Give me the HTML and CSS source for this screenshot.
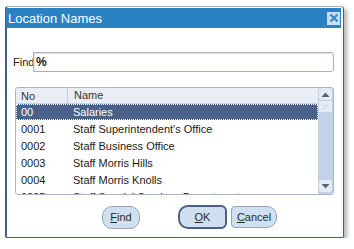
FILE: index.html
```html
<!DOCTYPE html>
<html lang="en">
    <head>
        <meta charset="UTF-8" />
        <title>Location Names</title>
        <link rel="stylesheet" href="styles.css">
    </head>
    <body>
        <div class="dialog">
            <div class="titleBar">
                <span class="title">Location Names</span>
                <span class="closeBtn">
                    <svg width="10" height="10" viewBox="0 0 10 10">
                        <path d="M1.5 1.5 L8.5 8.5 M8.5 1.5 L1.5 8.5" stroke="#3b86c6" stroke-width="2.2" />
                    </svg>
                </span>
            </div>
            <div class="body">
                <div class="findRow">
                    <label class="findLabel">Find</label>
                    <div class="findInput">%</div>
                </div>
                <div class="list">
                    <div class="rows">
                        <div class="row header"><span class="colNo">No</span><span class="colName">Name</span></div>
                        <div class="row selected"><span class="colNo">00</span><span class="colName">Salaries</span></div>
                        <div class="row"><span class="colNo">0001</span><span class="colName">Staff Superintendent's Office</span></div>
                        <div class="row"><span class="colNo">0002</span><span class="colName">Staff Business Office</span></div>
                        <div class="row"><span class="colNo">0003</span><span class="colName">Staff Morris Hills</span></div>
                        <div class="row"><span class="colNo">0004</span><span class="colName">Staff Morris Knolls</span></div>
                        <div class="row"><span class="colNo">0005</span><span class="colName">Staff Special Services Department</span></div>
                    </div>
                    <div class="scrollbar">
                        <div class="scrollBtn"><svg width="9" height="5" viewBox="0 0 9 5"><path d="M0.5 5 L4.5 0.5 L8.5 5 Z" fill="#55647a" /></svg></div>
                        <div class="thumb"><svg width="7" height="7" viewBox="0 0 7 7"><path d="M1 6 L6 1" stroke="#8b9bb2" stroke-width="1" stroke-dasharray="1 1.5" /></svg></div>
                        <div class="track"></div>
                        <div class="scrollBtn"><svg width="9" height="5" viewBox="0 0 9 5"><path d="M0.5 0 L8.5 0 L4.5 4.5 Z" fill="#55647a" /></svg></div>
                    </div>
                </div>
                <div class="buttons">
                    <span class="btn findBtn"><u>F</u>ind</span>
                    <span class="btn okBtn"><u>O</u>K</span>
                    <span class="btn cancelBtn"><u>C</u>ancel</span>
                </div>
            </div>
        </div>
    </body>
</html>
```

FILE: styles.css
```css
* {
    box-sizing: border-box;
}
body {
    margin: 0;
    background-color: #ffffff;
    font-family: "Liberation Sans", Arial, sans-serif;
    font-size: 11px;
    color: #1a1a1a;
}
.dialog {
    margin: 6px 0 0 5px;
    width: 339px;
    height: 232px;
    border: 1px solid #4b5f86;
    border-left-width: 2px;
    border-top-color: #a3aec2;
    border-radius: 3px 3px 2px 2px;
    box-shadow: 3px 3px 4px rgba(0, 0, 0, 0.3);
    background-color: #ffffff;
    padding-top: 1px;
    display: flex;
    flex-direction: column;
}
.titleBar {
    height: 20px;
    margin: 0 2px 0 -1px;
    background-color: #2b82c3;
    display: flex;
    align-items: center;
    justify-content: space-between;
    padding: 0 1px 0 2px;
}
.title {
    color: #ffffff;
    font-size: 13px;
}
.closeBtn {
    width: 13px;
    height: 13px;
    background-color: #c8ddef;
    display: flex;
    align-items: center;
    justify-content: center;
}
.body {
    padding: 24px 9px 0 6px;
    display: flex;
    flex-direction: column;
}
.findRow {
    display: flex;
    align-items: center;
}
.findLabel {
    width: 20px;
}
.findInput {
    flex: 1;
    height: 20px;
    line-height: 18px;
    padding-left: 2px;
    border: 1px solid #a6b0c2;
    border-radius: 0 3px 3px 0;
    font-weight: bold;
    font-size: 12px;
    box-shadow: inset 1px 1px 0 #e2e6ec;
}
.list {
    margin-top: 15px;
    margin-left: 2px;
    height: 108px;
    border: 1px solid #a9b4c6;
    border-radius: 3px;
    display: flex;
    overflow: hidden;
}
.rows {
    flex: 1;
}
.row {
    height: 17px;
    display: flex;
    align-items: center;
    white-space: nowrap;
}
.header {
    height: 16px;
    background-color: #e9eef6;
    border-bottom: 1px solid #c9d2e0;
    color: #333333;
}
.header .colName {
    border-left: 1px solid #c5cdd9;
    height: 15px;
    line-height: 15px;
}
.colNo {
    width: 51px;
    padding-left: 5px;
}
.colName {
    padding-left: 6px;
}
.selected {
    height: 16px;
    background-color: #4a6289;
    color: #ffffff;
    outline: 1px dotted #ffffff;
    outline-offset: -1px;
}
.scrollbar {
    width: 15px;
    background-color: #c2d3e7;
    display: flex;
    flex-direction: column;
    padding: 0 1px 2px 1px;
}
.scrollBtn {
    height: 12px;
    background-color: #e6ecf4;
    border-radius: 3px;
    display: flex;
    align-items: center;
    justify-content: center;
}
.thumb {
    margin-top: 1px;
    height: 11px;
    background-color: #e6ecf4;
    display: flex;
    align-items: center;
    justify-content: center;
}
.track {
    flex: 1;
}
.buttons {
    margin-top: 10px;
    display: flex;
    align-items: center;
    padding-left: 89px;
}
.btn {
    height: 23px;
    border: 1px solid #9aa3b0;
    border-radius: 10px;
    background-color: #cfe0f1;
    display: flex;
    align-items: center;
    justify-content: center;
    color: #2a2a2a;
}
.findBtn {
    width: 38px;
    margin-right: 38px;
}
.okBtn {
    width: 49px;
    height: 24px;
    border: 2px solid #4b5f86;
    border-radius: 10px 6px 6px 10px;
    margin-right: 4px;
}
.cancelBtn {
    width: 46px;
    height: 22px;
    border-radius: 4px 10px 10px 4px;
}
```
